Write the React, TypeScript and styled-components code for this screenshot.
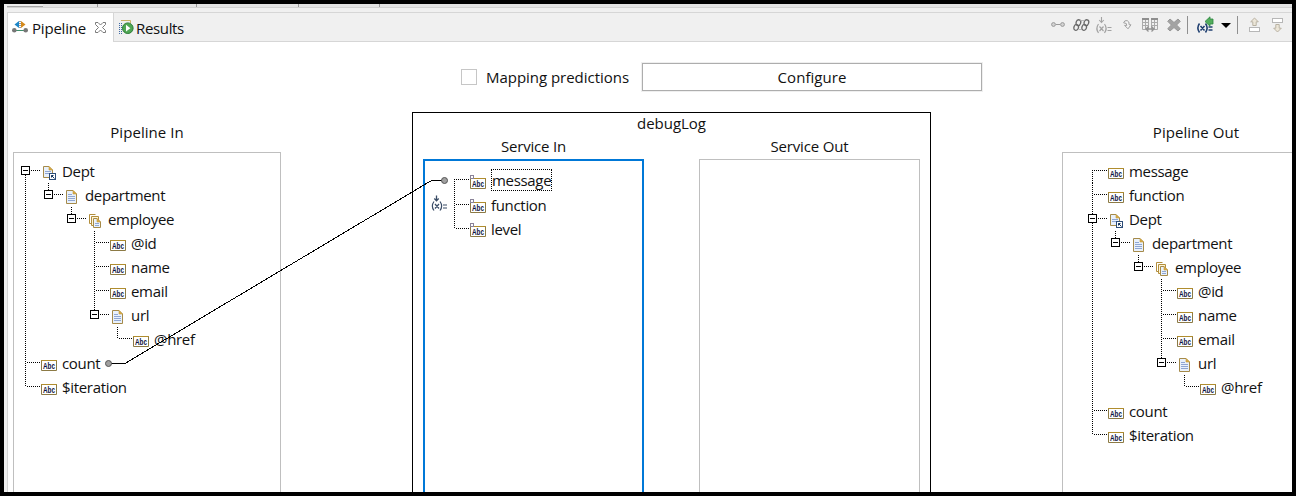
import React from "react";
import styled, { createGlobalStyle, css } from "styled-components";

const GlobalStyle = createGlobalStyle`
  * { box-sizing: border-box; }
  html, body { margin: 0; padding: 0; background: #000; }
  body {
    font-family: "Open Sans", "Noto Sans", sans-serif;
    font-size: 15px;
    line-height: 24px;
    letter-spacing: -0.03px;
    color: #111;
  }
  svg { display: block; flex: none; overflow: visible; }
`;

const Frame = styled.div`
  position: relative;
  width: 1296px;
  height: 496px;
  border: 4px solid #000;
  background: #f0f0f0;
  overflow: hidden;
  display: flex;
  flex-direction: column;
`;

const UpperStrip = styled.div`
  flex: none;
  height: 4px;
  margin-left: 3px;
  background: #e3e3e3;
  border-bottom: 1px solid #d2d2d2;
  display: flex;
`;

const StripTab = styled.div<{ $w: number; $first?: boolean }>`
  width: ${(p) => p.$w}px;
  height: 3px;
  border-right: 1px solid #999;
  ${(p) =>
    p.$first &&
    css`
      border-right: 0;
      border-bottom: 1px solid #a5a5a5;
      background: #ededed;
      margin-right: 54px;
    `}
`;

const View = styled.div`
  flex: 1;
  min-height: 0;
  margin: 4px 0 0 3px;
  border-left: 1px solid #d6d6d6;
  border-top: 1px solid #d6d6d6;
  display: flex;
  flex-direction: column;
`;

const TabBar = styled.div`
  flex: none;
  height: 29px;
  display: flex;
`;

const Tab = styled.div<{ $active?: boolean }>`
  display: flex;
  align-items: center;
  height: 29px;
  padding-bottom: 1px;
  ${(p) =>
    p.$active
      ? css`
          width: 106px;
          padding-left: 4px;
          background: #fff;
          border-right: 1px solid #d6d6d6;
        `
      : css`
          width: 120px;
          padding-left: 5px;
          border-bottom: 1px solid #d6d6d6;
          padding-bottom: 0;
        `}
`;

const TabText = styled.span<{ $ml: number; $w: number; $ls?: number }>`
  margin-left: ${(p) => p.$ml}px;
  width: ${(p) => p.$w}px;
  letter-spacing: ${(p) => p.$ls ?? -0.2}px;
  white-space: nowrap;
  margin-top: 1px;
`;

const Toolbar = styled.div`
  flex: 1;
  border-bottom: 1px solid #d6d6d6;
  display: flex;
  align-items: flex-start;
  justify-content: flex-end;
  padding: 3px 9px 0 0;
`;

const Separator = styled.div`
  width: 1px;
  height: 18px;
  background: #8f8f8f;
`;

const Gap = styled.div<{ $w: number }>`
  width: ${(p) => p.$w}px;
`;

const Content = styled.div`
  flex: 1;
  min-height: 0;
  background: #fff;
  display: flex;
  flex-direction: column;
`;

const Options = styled.div`
  flex: none;
  height: 70px;
  padding: 21px 0 0 453px;
  display: flex;
  align-items: flex-start;
`;

const Checkbox = styled.div`
  width: 16px;
  height: 16px;
  margin-top: 6px;
  border: 1px solid #c6c6c6;
`;

const OptionLabel = styled.span`
  width: 156px;
  margin: 2px 0 0 9px;
  white-space: nowrap;
`;

const Configure = styled.button`
  width: 340px;
  height: 28px;
  padding: 0;
  border: 1px solid #adadad;
  outline: 1px solid #efefef;
  background: #fff;
  font: inherit;
  letter-spacing: 0.05px;
  color: inherit;
`;

const Columns = styled.div`
  flex: 1;
  min-height: 0;
  display: flex;
`;

const Column = styled.section<{ $w: number; $ml: number; $pt: number }>`
  flex: none;
  width: ${(p) => p.$w}px;
  margin-left: ${(p) => p.$ml}px;
  padding-top: ${(p) => p.$pt}px;
  display: flex;
  flex-direction: column;
`;

const ColumnTitle = styled.div<{ $h: number; $ls?: number }>`
  flex: none;
  height: ${(p) => p.$h}px;
  letter-spacing: ${(p) => p.$ls ?? 0.05}px;
  text-align: center;
`;

const Panel = styled.div<{ $focus?: boolean; $pad: string }>`
  flex: 1;
  padding: ${(p) => p.$pad};
  border: ${(p) => (p.$focus ? "2px solid #0078d7" : "1px solid #bfbfbf")};
  border-bottom: 0;
  overflow: hidden;
`;

const ServiceBox = styled.section`
  flex: none;
  width: 519px;
  margin-left: 131px;
  border: 1px solid #000;
  border-bottom: 0;
  display: flex;
  flex-direction: column;
`;

const ServiceTitle = styled.div`
  flex: none;
  height: 21px;
  line-height: 20px;
  text-align: center;
`;

const ServiceColumns = styled.div`
  flex: 1;
  display: flex;
`;

const Row = styled.div`
  display: flex;
  height: 24px;
`;

const IconSlot = styled.div`
  width: 16px;
  margin-right: 5px;
`;

const NodeText = styled.span<{ $focus?: boolean }>`
  white-space: nowrap;
  line-height: 22px;
  letter-spacing: -0.32px;
  ${(p) =>
    p.$focus &&
    css`
      height: 22px;
      margin-top: -1px;
      padding: 0 1px 0 1px;
      outline: 1px dotted #000;
      outline-offset: -1px;
    `}
`;

const Wires = styled.svg`
  position: absolute;
  left: -4px;
  top: -4px;
  pointer-events: none;
`;

type Kind = "abc" | "opt" | "doc" | "docs" | "ref";
interface Item {
  text: string;
  kind: Kind;
  level: number;
  focus?: boolean;
}

const deptBranch: Item[] = [
  { text: "Dept", kind: "ref", level: 0 },
  { text: "department", kind: "doc", level: 1 },
  { text: "employee", kind: "docs", level: 2 },
  { text: "@id", kind: "abc", level: 3 },
  { text: "name", kind: "abc", level: 3 },
  { text: "email", kind: "abc", level: 3 },
  { text: "url", kind: "doc", level: 3 },
  { text: "@href", kind: "abc", level: 4 },
];
const tail: Item[] = [
  { text: "count", kind: "abc", level: 0 },
  { text: "$iteration", kind: "abc", level: 0 },
];
const pipelineIn: Item[] = [...deptBranch, ...tail];
const pipelineOut: Item[] = [
  { text: "message", kind: "abc", level: 0 },
  { text: "function", kind: "abc", level: 0 },
  ...deptBranch,
  ...tail,
];
const serviceIn: Item[] = [
  { text: "message", kind: "opt", level: 0, focus: true },
  { text: "function", kind: "opt", level: 0 },
  { text: "level", kind: "opt", level: 0 },
];

const dotted = {
  stroke: "#000",
  strokeWidth: 1,
  strokeDasharray: "1 1",
  fill: "none",
  shapeRendering: "crispEdges" as const,
};

const hasLaterSibling = (items: Item[], index: number, level: number) => {
  for (let i = index + 1; i < items.length; i++) {
    if (items[i].level < level) return false;
    if (items[i].level === level) return true;
  }
  return false;
};

const Guide = ({ on }: { on: boolean }) => (
  <svg width="23" height="24">{on && <path d="M4.5 1V24" {...dotted} />}</svg>
);

const Branch = ({ items, index }: { items: Item[]; index: number }) => {
  const { level, focus } = items[index];
  const open = items[index + 1]?.level > level;
  const later = hasLaterSibling(items, index, level);
  const y = focus ? 9.5 : 10.5;
  return (
    <svg width="20" height="24">
      {index > 0 && <path d={`M4.5 -1V${open ? 6 : 11}`} {...dotted} />}
      {later && <path d={`M4.5 ${open ? 15 : index ? 11 : y - 0.5}V24`} {...dotted} />}
      <path d={`M${open ? 10 : 6} ${y}H20`} {...dotted} />
      {open && (
        <g shapeRendering="crispEdges">
          <rect x="0.5" y="6.5" width="8" height="8" fill="#fff" stroke="#000" />
          <path d="M2 10.5H7" stroke="#000" />
        </g>
      )}
    </svg>
  );
};

const Abc = ({ optional }: { optional?: boolean }) => (
  <svg width="16" height="24">
    <path d="M0.5 8.5V18.5H15.5V8.5" fill="#fff" stroke="#8c7a45" />
    <path d="M0 8.5H16" stroke="#b08d2e" />
    <text
      x="2"
      y="17"
      textLength="12"
      lengthAdjust="spacingAndGlyphs"
      fontFamily="Liberation Sans"
      fontWeight="700"
      fontSize="9.5"
      letterSpacing="0"
      fill="#0b1240"
    >
      Abc
    </text>
    {optional && <rect x="0.5" y="5.5" width="3" height="3" fill="#fff" stroke="#8a8398" />}
  </svg>
);

const Sheet = ({ x, y, w = 11, h = 14 }: { x: number; y: number; w?: number; h?: number }) => (
  <g transform={`translate(${x} ${y})`}>
    <path
      d={`M.5 .5H${w - 4}L${w - 0.5} 4V${h - 0.5}H.5Z`}
      fill="#e9f1fb"
      stroke="#a58a4a"
    />
    <path d={`M${w - 4} .5L${w - 0.5} 4H${w - 4}Z`} fill="#d9ab45" stroke="#c79a3a" strokeWidth=".6" />
    <path
      d={h > 12 ? `M2 4.5H6M2 6.5H${w - 2}M2 8.5H${w - 2}M2 10.5H${w - 2}` : `M2 5.5H${w - 2}M2 7.5H${w - 2}`}
      stroke="#8fa6d3"
    />
  </g>
);

const NodeIcon = ({ kind }: { kind: Kind }) => {
  if (kind === "abc") return <Abc />;
  if (kind === "opt") return <Abc optional />;
  return (
    <svg width="16" height="24">
      {kind === "doc" && <Sheet x={2} y={6} />}
      {kind === "ref" && (
        <>
          <Sheet x={2} y={6} w={10} h={12} />
          <rect x="8.5" y="13.5" width="6" height="6" fill="#fff" stroke="#2d4d78" />
          <path d="M10.5 17.5V15.5H12.5M10.5 15.5L13.5 18.5" fill="none" stroke="#16365f" />
        </>
      )}
      {kind === "docs" && (
        <>
          <path d="M2.5 15.5V6.5H8.5" fill="none" stroke="#b28e3c" />
          <path d="M2.5 15.5H4.5" stroke="#b28e3c" />
          <path d="M4.5 17.5V8.5H11.5V17.5Z" fill="#fff4d4" stroke="#b28e3c" />
          <Sheet x={6} y={10} w={8} h={10} />
        </>
      )}
    </svg>
  );
};

const Tree = ({ items }: { items: Item[] }) => (
  <>
    {items.map((item, i) => (
      <Row key={i}>
        {Array.from({ length: item.level }, (_, l) => (
          <Guide key={l} on={hasLaterSibling(items, i, l)} />
        ))}
        <Branch items={items} index={i} />
        <IconSlot>
          <NodeIcon kind={item.kind} />
        </IconSlot>
        <NodeText $focus={item.focus}>{item.text}</NodeText>
      </Row>
    ))}
  </>
);

const PipelineIcon = () => (
  <svg width="16" height="14">
    <path d="M3 10.5H13" stroke="#3f8f6b" />
    <path d="M7 1V8L2.5 4.5Z" fill="#1d86c8" />
    <path d="M9 1V8L13.5 4.5Z" fill="#d58a1c" />
    <path d="M8 1V9" stroke="#333" strokeDasharray="1 1" />
    <circle cx="2.3" cy="10.3" r="2.3" fill="#777" />
    <circle cx="13.7" cy="10.3" r="2.3" fill="#777" />
  </svg>
);

const CloseIcon = () => (
  <svg width="11" height="11">
    <path
      d="M.5 .5H3L5.5 3L8 .5H10.5V2.5L7.5 5.5L10.5 8.5V10.5H8L5.5 8L3 10.5H.5V8.5L3.5 5.5L.5 2.5Z"
      fill="#fff"
      stroke="#7b7b7b"
    />
  </svg>
);

const ResultsIcon = () => (
  <svg width="16" height="16">
    <path d="M2 1.5H11.5V4" fill="none" stroke="#c9b36a" />
    <path d="M.5 4V15M2.5 4V15" stroke="#3f6aa5" strokeDasharray="1 1" />
    <circle cx="8.8" cy="9.2" r="5.3" fill="#4fa653" stroke="#2b7c35" />
    <path d="M7 5.8V12.6L11.4 9.2Z" fill="#fff" />
  </svg>
);

const LinkIcon = () => (
  <svg width="14" height="22">
    <circle cx="2.5" cy="8.5" r="1.9" fill="#d4d4d4" stroke="#999" />
    <circle cx="11.5" cy="8.5" r="1.9" fill="#d4d4d4" stroke="#999" />
    <path d="M5 8.5H9" stroke="#999" />
  </svg>
);

const ChainIcon = () => (
  <svg width="17" height="22" fill="none" stroke="#6a6a6a" strokeWidth="1.3">
    {[0, 8].map((x) => (
      <g key={x} transform={`translate(${x} 0)`}>
        <ellipse cx="5.4" cy="6.7" rx="2.3" ry="3" transform="rotate(18 5.4 6.7)" />
        <ellipse cx="3.2" cy="11.4" rx="2.3" ry="3" transform="rotate(18 3.2 11.4)" />
      </g>
    ))}
    <path d="M7 4.5H12M6 13.5H9" strokeWidth=".8" stroke="#aaa" />
  </svg>
);

const VarGlyph = ({ color, y, bold }: { color: string; y: number; bold?: boolean }) => (
  <g fill="none" stroke={color} strokeWidth={bold ? 1.6 : 1.2} transform={`translate(0 ${y})`}>
    <path d="M2.5 0Q-.8 4.5 2.5 9M8.5 0Q11.8 4.5 8.5 9M3.5 2.5L7.5 7M7.5 2.5L3.5 7M11.5 3.5H15.5M11.5 6.5H15.5" />
  </g>
);

const SetValueIcon = ({ color = "#a3a3a3" }: { color?: string }) => (
  <svg width="16" height="22">
    <VarGlyph color={color} y={8} />
    <path d="M5.5 1V6M3.2 4L5.5 6.5L7.8 4" fill="none" stroke={color} strokeWidth="1.1" />
  </svg>
);

const LoopIcon = () => (
  <svg width="9" height="22">
    <path
      d="M.6 6.8Q1.4 4 4.2 4.6Q6.4 5.4 6.2 8.8H8L5 12.8L1.6 9.4H3.8Q4.2 6.8 .6 6.8Z"
      fill="#f4f4f4"
      stroke="#a0a0a0"
    />
  </svg>
);

const TableIcon = () => (
  <svg width="16" height="22" fill="none">
    <path d="M.5 3.5H6.5V13.5H.5ZM9.5 3.5H15.5V13.5H9.5ZM.5 6.5H6.5M.5 9.5H6.5M9.5 6.5H15.5M9.5 9.5H15.5M3.5 4V13M12.5 4V13" stroke="#aaa" />
    <path d="M0 3H7M9 3H16" stroke="#8e8e8e" strokeWidth="2" />
    <path d="M4.5 13H11.5M6.5 10.5L4 13L6.5 15.5M9.5 10.5L12 13L9.5 15.5" stroke="#939393" strokeWidth="1.3" />
  </svg>
);

const DeleteIcon = () => (
  <svg width="14" height="22">
    <path
      d="M3 3L7 6.5L11 3L13.3 5.3L9.6 9L13.3 12.7L11 15L7 11.5L3 15L.7 12.7L4.4 9L.7 5.3Z"
      fill="#a3a3a3"
      stroke="#979797"
      strokeLinejoin="round"
    />
  </svg>
);

const AddValueIcon = () => (
  <svg width="16" height="22">
    <VarGlyph color="#1f3f70" y={7.5} bold />
    <path d="M8 5.5L13 .8V3H16V8H13V10.2Z" fill="#53ad5c" stroke="#2c8740" strokeWidth=".8" />
  </svg>
);

const Caret = () => (
  <svg width="10" height="22">
    <path d="M0 7H10L5 12Z" fill="#000" />
  </svg>
);

const MoveIcon = ({ down }: { down?: boolean }) => (
  <svg width="11" height="22">
    <g transform={down ? "translate(0 18) scale(1 -1)" : undefined}>
      <path d="M5.5 2L9.3 5.8H7.2V9.5H3.8V5.8H1.7Z" fill="#ece6d8" stroke="#b9b2a3" />
      <rect x=".5" y="11.5" width="10" height="4" fill="#fff" stroke="#b7b7b7" />
    </g>
  </svg>
);

export default function App() {
  return (
    <>
      <GlobalStyle />
      <Frame>
        <UpperStrip>
          <StripTab $w={36} $first />
          <StripTab $w={1} />
          <StripTab $w={99} />
          <StripTab $w={102} />
          <StripTab $w={81} />
        </UpperStrip>
        <View>
          <TabBar>
            <Tab $active>
              <PipelineIcon />
              <TabText $ml={4} $w={63}>Pipeline</TabText>
              <CloseIcon />
            </Tab>
            <Tab>
              <ResultsIcon />
              <TabText $ml={1} $w={50} $ls={-0.35}>Results</TabText>
            </Tab>
            <Toolbar>
              <LinkIcon />
              <Gap $w={8} />
              <ChainIcon />
              <Gap $w={6} />
              <SetValueIcon />
              <Gap $w={11} />
              <LoopIcon />
              <Gap $w={10} />
              <TableIcon />
              <Gap $w={9} />
              <DeleteIcon />
              <Gap $w={6} />
              <Separator />
              <Gap $w={9} />
              <AddValueIcon />
              <Gap $w={8} />
              <Caret />
              <Gap $w={6} />
              <Separator />
              <Gap $w={11} />
              <MoveIcon />
              <Gap $w={12} />
              <MoveIcon down />
            </Toolbar>
          </TabBar>
          <Content>
            <Options>
              <Checkbox />
              <OptionLabel>Mapping predictions</OptionLabel>
              <Configure>Configure</Configure>
            </Options>
            <Columns>
              <Column $w={268} $ml={5} $pt={8}>
                <ColumnTitle $h={32}>Pipeline In</ColumnTitle>
                <Panel $pad="7px 0 0 7px">
                  <Tree items={pipelineIn} />
                </Panel>
              </Column>
              <ServiceBox>
                <ServiceTitle>debugLog</ServiceTitle>
                <ServiceColumns>
                  <Column $w={221} $ml={10} $pt={0}>
                    <ColumnTitle $h={25} $ls={-0.2}>Service In</ColumnTitle>
                    <Panel $focus $pad="9px 0 0 25px">
                      <Tree items={serviceIn} />
                    </Panel>
                  </Column>
                  <Column $w={221} $ml={55} $pt={0}>
                    <ColumnTitle $h={25} $ls={-0.15}>Service Out</ColumnTitle>
                    <Panel $pad="0" />
                  </Column>
                </ServiceColumns>
              </ServiceBox>
              <Column $w={268} $ml={131} $pt={8}>
                <ColumnTitle $h={32}>Pipeline Out</ColumnTitle>
                <Panel $pad="7px 0 0 25px">
                  <Tree items={pipelineOut} />
                </Panel>
              </Column>
            </Columns>
          </Content>
        </View>
        <Wires width="1296" height="496">
          <path
            d="M111 363.5H125L431.5 180.5H442"
            fill="none"
            stroke="#000"
            shapeRendering="crispEdges"
          />
          <circle cx="108.5" cy="363.5" r="3" fill="#a0a0a0" stroke="#555" />
          <circle cx="444.5" cy="180.5" r="3" fill="#a0a0a0" stroke="#555" />
          <g transform="translate(431.5 195.5)">
            <VarGlyph color="#3a4c66" y={6} />
            <path d="M5 0V5M2.8 3L5 5.3L7.2 3" fill="none" stroke="#3a4c66" strokeWidth="1.3" />
          </g>
        </Wires>
      </Frame>
    </>
  );
}
